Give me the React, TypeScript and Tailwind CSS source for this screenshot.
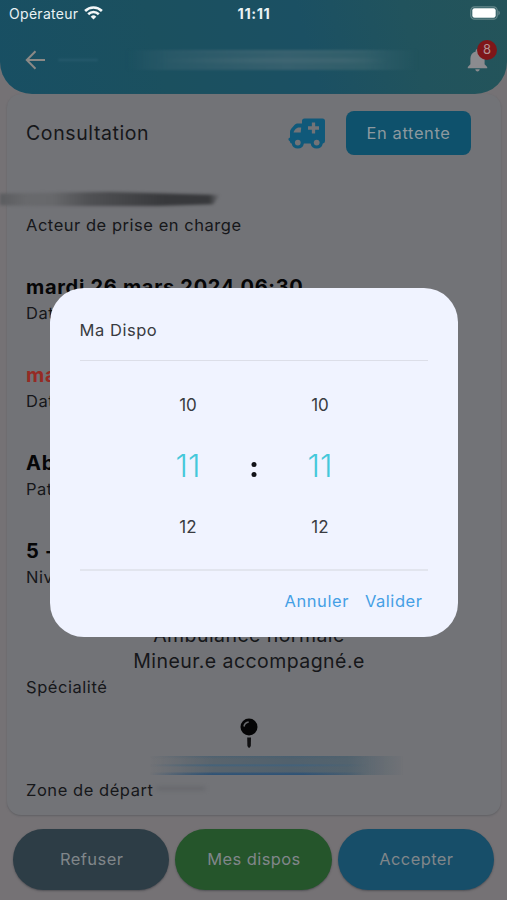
import React from "react";

type Field = { value: string; label: string; tone: string };

const fields: Field[] = [
  { value: "mardi 26 mars 2024 06:30", label: "Date", tone: "text-[#060607]" },
  { value: "mardi", label: "Date", tone: "text-[#962a24]" },
  { value: "Ab", label: "Patient", tone: "text-[#060607]" },
  { value: "5 -", label: "Niveau", tone: "text-[#060607]" },
];

function StatusBar() {
  return (
    <div className="grid h-7 grid-cols-3 items-center pl-[9px] pr-[6px] text-[#e9f2f4]">
      <div className="flex items-center gap-[6px]">
        <span className="text-[14px] leading-7 tracking-[0.3px]">Opérateur</span>
        <svg className="mb-0.5" width="19" height="14" viewBox="0 0 19 14" fill="none" stroke="#f3f7f8" strokeWidth="2.6">
          <path d="M1.1 5a12 12 0 0 1 16.8 0" />
          <path d="M4.2 8.2a7.6 7.6 0 0 1 10.6 0" />
          <path d="M6.7 10.7a4 4 0 0 1 5.6 0L9.5 13.4z" fill="#f3f7f8" stroke="none" />
        </svg>
      </div>
      <span className="pb-px pr-[2px] text-center text-[14.5px] font-bold tracking-[0.6px]">11:11</span>
      <div className="flex justify-end pb-[2px]">
        <svg width="31" height="14" viewBox="0 0 31 14">
          <rect x="0.8" y="0.8" width="26.4" height="12.4" rx="3.8" fill="none" stroke="#67898d" strokeWidth="1.2" />
          <rect x="2.3" y="2.3" width="23.4" height="9.4" rx="2.2" fill="#ffffff" />
          <path d="M28.4 4.600c1.900.800 1.900 4 0 4.800z" fill="#67898d" />
        </svg>
      </div>
    </div>
  );
}

function Header() {
  return (
    <header className="h-[94px] rounded-b-[32px] bg-[linear-gradient(75deg,#184f63_0%,#1b505f_32%,#1b5063_60%,#21535d_80%,#24545a_100%)]">
      <StatusBar />
      <div className="flex h-16 items-center pl-[25px] pr-[10px]">
        <svg width="21" height="20" viewBox="0 0 21 20" fill="none" stroke="#8b8986" strokeWidth="2">
          <path d="M20 10H2M10.500 1.200 1.800 10l8.700 8.800" />
        </svg>
        <div className="ml-3 h-[2px] w-10 rounded-full bg-[#2d6073] opacity-70 blur-[1px]" />
        <div className="ml-7 h-5 w-[292px] bg-[linear-gradient(90deg,transparent,#285867_14%,#36606e_55%,#305e69_82%,transparent)] blur-[1px]">
          <div className="h-full bg-[linear-gradient(180deg,#41697588_0%,transparent_20%,transparent_35%,#4b6d7888_50%,transparent_75%)] [mask-image:linear-gradient(90deg,transparent_10%,black_45%,black_75%,transparent_90%)]" />
        </div>
        <div className="relative ml-auto h-8 w-[30px]">
          <svg className="absolute left-0 top-[5px]" width="21" height="23" viewBox="0 0 21 23" fill="#8b8b8f">
            <path d="M10.500 0C9.400 0 8.700.800 8.700 1.800v.600C5.300 3.200 3.400 6 3.400 9.500v5.800L.800 18v1.200h19.400V18l-2.600-2.700V9.500c0-3.500-1.900-6.300-5.300-7.100v-.600c0-1-.700-1.800-1.800-1.800zM8.300 20.300c0 1.200 1 2.200 2.200 2.200s2.200-1 2.200-2.200z" />
          </svg>
          <span className="absolute -top-1 right-0 flex size-5 items-center justify-center rounded-full bg-[#7f1619] text-[13px] text-[#b49496]">8</span>
        </div>
      </div>
    </header>
  );
}

function Ambulance() {
  return (
    <svg width="38" height="31" viewBox="0 0 38 31">
      <path fill="#10597a" d="M16.5.5h18A2.5 2.5 0 0 1 37 3v20a2.5 2.5 0 0 1-2.2 2.500A6.200 6.200 0 0 1 22.600 25.500h-6.700A6.200 6.200 0 0 1 3.700 25.500C2.500 25.300 2 24.400 2 23.500L.5 22v-1.600L2 19.500V14c0-1.200.4-2.300 1.200-3.200l3.500-4C7.500 5.900 8.700 5.500 10 5.500h4V3A2.500 2.500 0 0 1 16.500.5z" />
      <path fill="#727377" d="M5.500 14.500C6 12 8.500 9.400 11 9.400h2.200l-.5 5.100z" />
      <circle cx="9.800" cy="24.600" r="2.900" fill="#727377" />
      <circle cx="28.700" cy="24.600" r="2.900" fill="#727377" />
      <path d="M25.500 4.500v11M20 10h11" stroke="#727377" strokeWidth="3.300" />
    </svg>
  );
}

function FieldRow({ value, label, tone }: Field) {
  return (
    <div className="h-[88px] pl-[19px]">
      <div className={`text-[20px] font-bold leading-[26px] tracking-[0.7px] ${tone}`}>{value}</div>
      <div className="text-[16.500px] leading-[27px] tracking-[0.500px]">{label}</div>
    </div>
  );
}

function DetailCard() {
  return (
    <main className="ml-[7px] mr-[6px] h-[721px] rounded-[14px] bg-[#727377] text-[#16171a] shadow-[0_1px_2px_#606064]">
      <div className="flex h-[78px] items-center pl-[19px] pr-[30px]">
        <h1 className="pt-0.5 text-[19.500px] tracking-[0.600px]">Consultation</h1>
        <div className="ml-auto mr-[20px]"><Ambulance /></div>
        <button className="h-11 w-[125px] rounded-[8px] bg-[#0e516c] text-[16.500px] tracking-[0.600px] text-[#8d999f]">En attente</button>
      </div>
      <div className="-ml-[7px] mt-[20px] h-[14px] w-[220px] blur-[1.500px]">
        <div className="h-full bg-[linear-gradient(90deg,#5b5c5f,#68696c_12%,#67686b_24%,#505154_40%,#38393c_75%,#38393c_95%,transparent)] [clip-path:polygon(0_10%,50%_0,100%_22%,97%_88%,50%_110%,0_95%)]" />
      </div>
      <div className="mt-[5px] pl-[19px] text-[16.500px] leading-7 tracking-[0.530px]">Acteur de prise en charge</div>
      <div className="mt-[35px]">
        {fields.map((f, i) => <FieldRow key={i} {...f} />)}
      </div>
      <div className="-mt-[4px] pr-[10px] text-center text-[19.500px] leading-[26px] tracking-[0.440px]">
        <div>Ambulance normale</div>
        <div>Mineur.e accompagné.e</div>
      </div>
      <div className="pl-[19px] text-[16.500px] leading-[27px] tracking-[0.550px]">Spécialité</div>
      <svg className="ml-[233px] mt-[17px]" width="18" height="31" viewBox="0 0 18 31">
        <path d="M7.200 19.500h3.800l-.200 8.500-1.200 1.800h-1L7.400 28z" fill="#101012" />
        <circle cx="9" cy="9" r="8.500" fill="#050506" />
        <path d="M4 8.500C4.500 5.700 6 4.300 8.700 4" fill="none" stroke="#67686b" strokeWidth="1.600" />
      </svg>
      <div className="ml-[143px] mt-[7px] h-[19px] w-[254px] bg-[linear-gradient(90deg,transparent,#59646d_25%,#51616d_55%,#53636e_78%,transparent)] blur-[0.700px]">
        <div className="h-full bg-[linear-gradient(180deg,#43607588_0%,transparent_15%,transparent_40%,#42627c_48%,transparent_58%,transparent_82%,#2f5376_94%)] [mask-image:linear-gradient(90deg,transparent,black_25%,black_60%,transparent_85%)]" />
      </div>
      <div className="mt-px flex items-center gap-1 pl-[19px]">
        <span className="text-[16.500px] leading-7 tracking-[0.550px]">Zone de départ</span>
        <span className="mb-1 h-[3px] w-12 bg-[#646569] blur-[2px]" />
      </div>
    </main>
  );
}

function PickerColumn() {
  return (
    <div className="flex w-[132px] flex-col items-center text-[17px] leading-[30px] text-[#393b41]">
      <span>10</span>
      <span className="mb-[30px] mt-[30px] text-[31.500px] font-light leading-[32px] text-[#45c8da]">11</span>
      <span>12</span>
    </div>
  );
}

function TimeDialog() {
  return (
    <section className="absolute left-[50px] top-[288px] h-[349px] w-[408px] rounded-[34px] bg-[#f0f3ff] px-[29.500px]">
      <h2 className="h-[72px] pt-[28px] text-[16.500px] leading-7 tracking-[0.540px] text-[#393b41]">Ma Dispo</h2>
      <div className="h-px w-[348px] bg-[#dcdee8]" />
      <div className="relative flex h-[208px] justify-center pt-[29px]">
        <PickerColumn />
        <PickerColumn />
        <div className="absolute left-1/2 top-[101px] flex -translate-x-1/2 flex-col gap-[5px]">
          <i className="size-[5px] rounded-full bg-[#111217]" />
          <i className="size-[5px] rounded-full bg-[#111217]" />
        </div>
      </div>
      <div className="h-[2px] w-[348px] bg-[#e2e5ee]" />
      <div className="flex justify-end gap-4 pr-[6px] pt-[16px] text-[16.500px] leading-7 tracking-[0.550px] text-[#459fe5]">
        <button>Annuler</button>
        <button>Valider</button>
      </div>
    </section>
  );
}

export default function App() {
  return (
    <div className="relative h-[900px] w-[507px] overflow-hidden bg-[#757275] font-['Inter',sans-serif]">
      <Header />
      <DetailCard />
      <footer className="mx-[13px] mt-[14px] grid h-[61px] grid-cols-3 gap-[6px] text-[16.500px] tracking-[0.400px] text-[#80868a]">
        <button className="rounded-full bg-[#2d3d46] pl-px shadow-[0_1px_2px_#505055]">Refuser</button>
        <button className="rounded-full bg-[#25552b] pl-px shadow-[0_1px_2px_#505055]">Mes dispos</button>
        <button className="rounded-full bg-[#174e69] pl-px shadow-[0_1px_2px_#505055]">Accepter</button>
      </footer>
      <TimeDialog />
    </div>
  );
}
